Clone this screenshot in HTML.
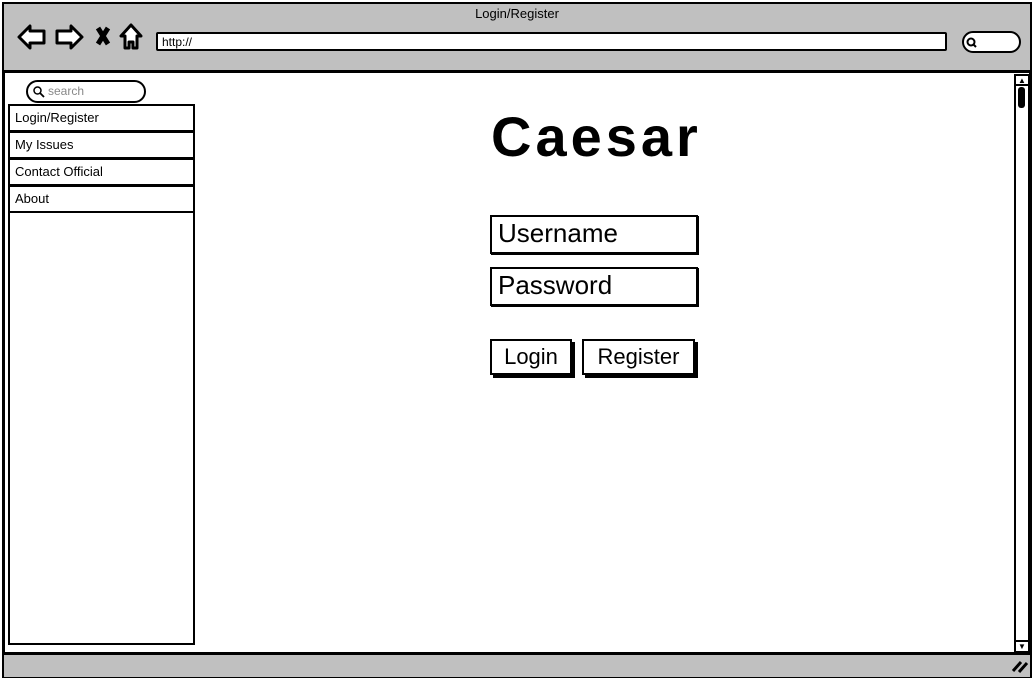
<!DOCTYPE html>
<html><head><style>
body{margin:0;width:1034px;height:680px;background:#fff;position:relative;overflow:hidden;font-family:"Liberation Sans",sans-serif;}
div{position:absolute;box-sizing:border-box;}
.item{left:8px;width:187px;height:28px;border:2px solid #000;font-size:13px;padding:4px 0 0 5px;background:#fff;}
.in{left:490px;width:208px;height:39px;border:2px solid #000;font-size:26px;padding:1px 0 0 6px;box-shadow:1px 1px 0 #000;}
.btn{top:339px;height:36px;border:2px solid #000;font-size:22px;text-align:center;line-height:32px;box-shadow:3px 3px 0 #000;}
</style></head><body>
<div style="left:2px;top:2px;width:1030px;height:676px;border:3px solid #000;background:#fff"></div>
<div style="left:4px;top:4px;width:1026px;height:69px;background:#c0c0c0;border-bottom:3px solid #000"></div>
<div style="left:0;top:6px;width:1034px;text-align:center;font-size:13px">Login/Register</div>
<svg style="position:absolute;left:16px;top:22px" width="130" height="30" viewBox="0 0 130 30" fill="#fff" stroke="#000" stroke-width="3" stroke-linejoin="round">
<path d="M3 15 L14 4 L14 9 L28 9 L28 21 L14 21 L14 26 Z"/>
<path d="M66 15 L55 4 L55 9 L41 9 L41 21 L55 21 L55 26 Z"/>
<path d="M82 6 L92 22 M92 6 L82 22" stroke-width="5"/>
<path d="M115 3 L105 14 L109 14 L109 26 L113 26 L113 20 L117 20 L117 26 L121 26 L121 14 L125 14 Z"/>
</svg>
<div style="left:156px;top:32px;width:791px;height:19px;border:2px solid #000;border-radius:2px;background:#fff;font-size:12px;padding:1px 4px">http://</div>
<div style="left:962px;top:31px;width:59px;height:22px;border:2px solid #000;border-radius:12px;background:#fff"></div>
<svg style="position:absolute;left:965px;top:36px" width="14" height="14"><circle cx="6" cy="6" r="3.5" fill="none" stroke="#000" stroke-width="2"/><path d="M8 8 L11 11" stroke="#000" stroke-width="2"/></svg>
<div style="left:1014px;top:74px;width:16px;height:579px;border:2px solid #000;background:#fff"></div>
<div style="left:1014px;top:74px;width:16px;height:12px;border:2px solid #000;font-size:8px;text-align:center;line-height:9px">▲</div>
<div style="left:1018px;top:87px;width:7px;height:21px;background:#000;border-radius:3px"></div>
<div style="left:1014px;top:640px;width:16px;height:13px;border:2px solid #000;font-size:8px;text-align:center;line-height:9px">▼</div>
<div style="left:4px;top:652px;width:1026px;height:25px;background:#c0c0c0;border-top:3px solid #000"></div>
<svg style="position:absolute;left:1010px;top:658px" width="20" height="16"><path d="M3 13 L11 4 M9 14 L17 5" stroke="#000" stroke-width="3"/></svg>
<div style="left:26px;top:80px;width:120px;height:23px;border:2px solid #000;border-radius:12px;font-size:12px;color:#888;padding:2px 0 0 20px">search</div>
<svg style="position:absolute;left:32px;top:85px" width="14" height="14"><circle cx="5.5" cy="5.5" r="3.5" fill="none" stroke="#000" stroke-width="1.5"/><path d="M8 8 L12 12" stroke="#000" stroke-width="1.8"/></svg>
<div style="left:8px;top:104px;width:187px;height:541px;border:2px solid #000"></div>
<div class="item" style="top:104px">Login/Register</div>
<div class="item" style="top:131px">My Issues</div>
<div class="item" style="top:158px">Contact Official</div>
<div class="item" style="top:185px">About</div>
<div style="left:491px;top:104px;width:230px;font-size:56px;font-weight:bold;letter-spacing:4px;white-space:nowrap">Caesar</div>
<div class="in" style="top:215px">Username</div>
<div class="in" style="top:267px">Password</div>
<div class="btn" style="left:490px;width:82px">Login</div>
<div class="btn" style="left:582px;width:113px">Register</div>
</body></html>
